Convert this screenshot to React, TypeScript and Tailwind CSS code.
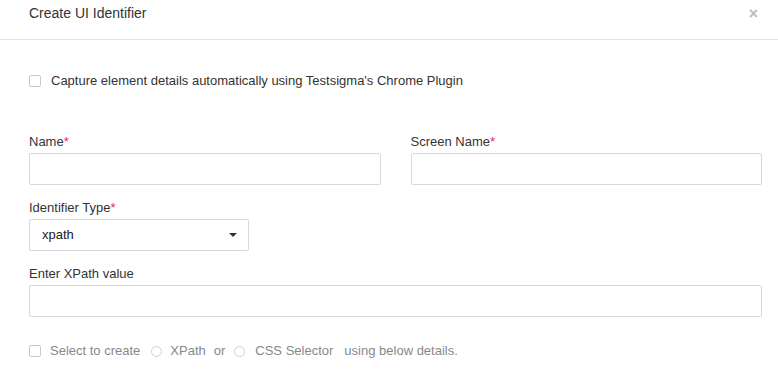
import React from "react";

function Label({ text, required }: { text: string; required?: boolean }) {
  return (
    <div className="h-[18px] leading-[18px] mb-[2px] text-[13px] text-[#333]">
      {text}
      {required && <span className="text-[#f0245a]">*</span>}
    </div>
  );
}

function Box() {
  return <span className="inline-block w-[12px] h-[12px] border border-[#c8c8c8] rounded-[2px] bg-white" />;
}

function Radio() {
  return <span className="inline-block w-[11px] h-[11px] border border-[#d0d0d0] rounded-full bg-white" />;
}

export default function App() {
  return (
    <div
      className="w-[778px] h-[392px] bg-white overflow-hidden"
      style={{ fontFamily: '"Liberation Sans", Arial, sans-serif' }}
    >
      <div className="h-[40px] border-b border-[#e5e5e5] flex items-start justify-between pl-[29px] pr-[20px]">
        <div className="text-[14px] text-[#333] leading-[18px] pt-[4px]">Create UI Identifier</div>
        <div className="text-[#bbb] text-[16px] font-bold leading-[18px] pt-[5px]">×</div>
      </div>

      <div className="pl-[29px] pr-[16px]">
        <div className="flex items-center h-[18px] mt-[32px]">
          <Box />
          <span className="ml-[10px] text-[13px] text-[#333]">
            Capture element details automatically using Testsigma's Chrome Plugin
          </span>
        </div>

        <div className="grid grid-cols-2 gap-[30px] mt-[43px]">
          <div>
            <Label text="Name" required />
            <div className="h-[32px] border border-[#d5d8de] rounded-[2px]" />
          </div>
          <div>
            <Label text="Screen Name" required />
            <div className="h-[32px] border border-[#d5d8de] rounded-[2px]" />
          </div>
        </div>

        <div className="mt-[14px]">
          <Label text="Identifier Type" required />
          <div className="w-[220px] h-[32px] border border-[#d5d8de] rounded-[2px] flex items-center justify-between pl-[12px] pr-[11px]">
            <span className="text-[13px] text-[#222]">xpath</span>
            <span className="w-0 h-0 border-l-[4px] border-r-[4px] border-t-[4px] border-l-transparent border-r-transparent border-t-[#333]" />
          </div>
        </div>

        <div className="mt-[14px]">
          <Label text="Enter XPath value" />
          <div className="h-[32px] border border-[#d5d8de] rounded-[2px]" />
        </div>

        <div className="flex items-center h-[18px] mt-[25px] text-[13px] text-[#888]">
          <Box />
          <span className="ml-[9px]">Select to create</span>
          <span className="ml-[11px] flex"><Radio /></span>
          <span className="ml-[8px]">XPath</span>
          <span className="ml-[8px]">or</span>
          <span className="ml-[9px] flex"><Radio /></span>
          <span className="ml-[10px]">CSS Selector</span>
          <span className="ml-[11px]">using below details.</span>
        </div>
      </div>
    </div>
  );
}
